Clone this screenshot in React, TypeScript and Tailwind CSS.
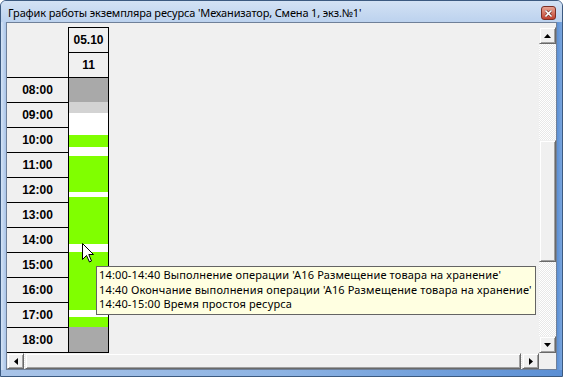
import React from "react";

const hours = ["08:00", "09:00", "10:00", "11:00", "12:00", "13:00", "14:00", "15:00", "16:00", "17:00", "18:00"];

const segs: { cls: string }[] = [
  { cls: "h-[24px] bg-[#a9a9a9]" },
  { cls: "h-[11px] bg-[#d3d3d3]" },
  { cls: "h-[22px] bg-white" },
  { cls: "h-[12px] bg-[#80ff00]" },
  { cls: "h-[9px] bg-white" },
  { cls: "h-[36px] bg-[#80ff00]" },
  { cls: "h-[5px] bg-white" },
  { cls: "h-[47px] bg-[#80ff00]" },
  { cls: "h-[8px] bg-white" },
  { cls: "h-[58px] bg-[#80ff00]" },
  { cls: "h-[7px] bg-white" },
  { cls: "h-[10px] bg-[#80ff00]" },
  { cls: "h-[25px] bg-[#a9a9a9]" },
];

function Arrow({ dir }: { dir: "up" | "down" | "left" | "right" }) {
  const pts =
    dir === "up"
      ? "0,4 7,4 3.5,0"
      : dir === "down"
      ? "0,0 7,0 3.5,4"
      : dir === "left"
      ? "4,0 4,7 0,3.5"
      : "0,0 0,7 4,3.5";
  const w = dir === "up" || dir === "down" ? 7 : 4;
  const h = dir === "up" || dir === "down" ? 4 : 7;
  return (
    <svg width={w} height={h} viewBox={`0 0 ${w} ${h}`}>
      <polygon points={pts} fill="#000" />
    </svg>
  );
}

function SBtn({ dir, cls }: { dir: "up" | "down" | "left" | "right"; cls: string }) {
  return (
    <div
      className={`${cls} shrink-0 flex items-center justify-center bg-[#f0f0f0] border border-t-[#f0f0f0] border-l-[#f0f0f0] border-r-[#696969] border-b-[#696969] shadow-[inset_1px_1px_0_#ffffff,inset_-1px_-1px_0_#a0a0a0]`}
    >
      <Arrow dir={dir} />
    </div>
  );
}

export default function App() {
  return (
    <div className="w-[563px] h-[377px] relative overflow-hidden flex flex-col border border-[#3c5a80] rounded-t-[6px] bg-[#b4cced] font-['Liberation_Sans',sans-serif]">
      {/* Title bar */}
      <div className="h-[21px] shrink-0 flex items-center justify-between pl-[7px] pr-[6px] bg-linear-to-b from-[#d3e2f4] to-[#bcd2ee]">
        <span className="text-[11px] leading-none text-black font-['Noto_Sans',sans-serif] tracking-[-0.15px] pt-[2px]">
          График работы экземпляра ресурса 'Механизатор, Смена 1, экз.№1'
        </span>
        <div className="w-[15px] h-[14px] mt-[3px] rounded-[3px] border border-[#7b2f25] bg-linear-to-b from-[#e6a393] to-[#c0402e] flex items-center justify-center">
          <svg width="7" height="7" viewBox="0 0 7 7">
            <path d="M1 1 L6 6 M6 1 L1 6" stroke="#5a1a12" strokeWidth="2.6" strokeLinecap="square" />
            <path d="M1 1 L6 6 M6 1 L1 6" stroke="#ffffff" strokeWidth="1.6" strokeLinecap="square" />
          </svg>
        </div>
      </div>

      {/* Body */}
      <div className="flex-1 flex flex-col">
        <div className="flex">
          <div className="w-[5px] shrink-0 bg-linear-to-r from-[#d6e4f5] to-[#a9c4e8]" />
          {/* Client */}
          <div className="w-[551px] h-[348px] border border-[#6f8099] bg-[#f0f0f0] flex flex-col">
            <div className="h-[330px] flex">
              {/* Grid */}
              <div className="w-[532px] pt-[4px] flex">
                {/* Label column */}
                <div className="w-[62px] flex flex-col border-r border-black">
                  <div className="h-[51px] border-b border-black" />
                  {hours.map((h) => (
                    <div
                      key={h}
                      className="h-[25px] border-b border-black flex items-center justify-center text-[12px] font-bold text-black"
                    >
                      {h}
                    </div>
                  ))}
                </div>
                {/* Data column */}
                <div className="w-[40px] flex flex-col border-r border-black border-t">
                  <div className="h-[25px] border-b border-black flex items-center justify-center text-[12px] font-bold text-black">
                    05.10
                  </div>
                  <div className="h-[25px] border-b border-black flex items-center justify-center text-[12px] font-bold text-black">
                    11
                  </div>
                  <div className="flex flex-col border-b border-black">
                    {segs.map((s, i) => (
                      <div key={i} className={s.cls} />
                    ))}
                  </div>
                </div>
              </div>
              {/* Vertical scrollbar */}
              <div className="w-[17px] pt-[4px] flex flex-col">
                <SBtn dir="up" cls="w-[17px] h-[17px]" />
                <div className="flex-1 flex flex-col bg-[repeating-conic-gradient(#ffffff_0_25%,#e8e8e8_0_50%)] bg-[length:2px_2px]">
                  <div className="h-[96px]" />
                  <div className="h-[122px] bg-[#f0f0f0] border border-t-[#f0f0f0] border-l-[#f0f0f0] border-r-[#696969] border-b-[#696969] shadow-[inset_1px_1px_0_#ffffff,inset_-1px_-1px_0_#a0a0a0]" />
                </div>
                <SBtn dir="down" cls="w-[17px] h-[17px]" />
              </div>
            </div>
            {/* Horizontal scrollbar */}
            <div className="h-[16px] flex">
              <div className="w-[532px] flex bg-[repeating-conic-gradient(#ffffff_0_25%,#e8e8e8_0_50%)] bg-[length:2px_2px]">
                <SBtn dir="left" cls="w-[17px] h-[16px]" />
                <div className="flex-1 bg-[#f0f0f0] border border-t-[#f0f0f0] border-l-[#f0f0f0] border-r-[#696969] border-b-[#696969] shadow-[inset_1px_1px_0_#ffffff,inset_-1px_-1px_0_#a0a0a0] mx-[1px]" />
                <SBtn dir="right" cls="w-[17px] h-[16px]" />
              </div>
              <div className="w-[17px] bg-[#f0f0f0]" />
            </div>
          </div>
          <div className="w-[5px] shrink-0 bg-linear-to-r from-[#5b8fd4] to-[#7aa6de]" />
        </div>
        <div className="flex-1 bg-linear-to-r from-[#a9c4e8] via-[#8db3e3] to-[#5b8fd4]" />
      </div>

      {/* Tooltip */}
      <div className="absolute left-[95px] top-[265px] w-[440px] h-[49px] border border-[#646464] bg-[#ffffe1] pl-[2px] pt-[1px] text-[11px] leading-[14.5px] tracking-[0.15px] text-black font-['Noto_Sans',sans-serif]">
        <div>14:00-14:40 Выполнение операции 'А16 Размещение товара на хранение'</div>
        <div>14:40 Окончание выполнения операции 'А16 Размещение товара на хранение'</div>
        <div>14:40-15:00 Время простоя ресурса</div>
      </div>

      {/* Cursor */}
      <svg className="absolute left-[81px] top-[242px]" width="13" height="20" viewBox="0 0 13 20">
        <path
          d="M0.5 0.5 L0.5 16.5 L4.5 12.5 L7.5 19 L9.5 18 L6.8 11.5 L11.5 11.5 Z"
          fill="#ffffff"
          stroke="#000000"
          strokeWidth="1"
          strokeLinejoin="miter"
        />
      </svg>
    </div>
  );
}
